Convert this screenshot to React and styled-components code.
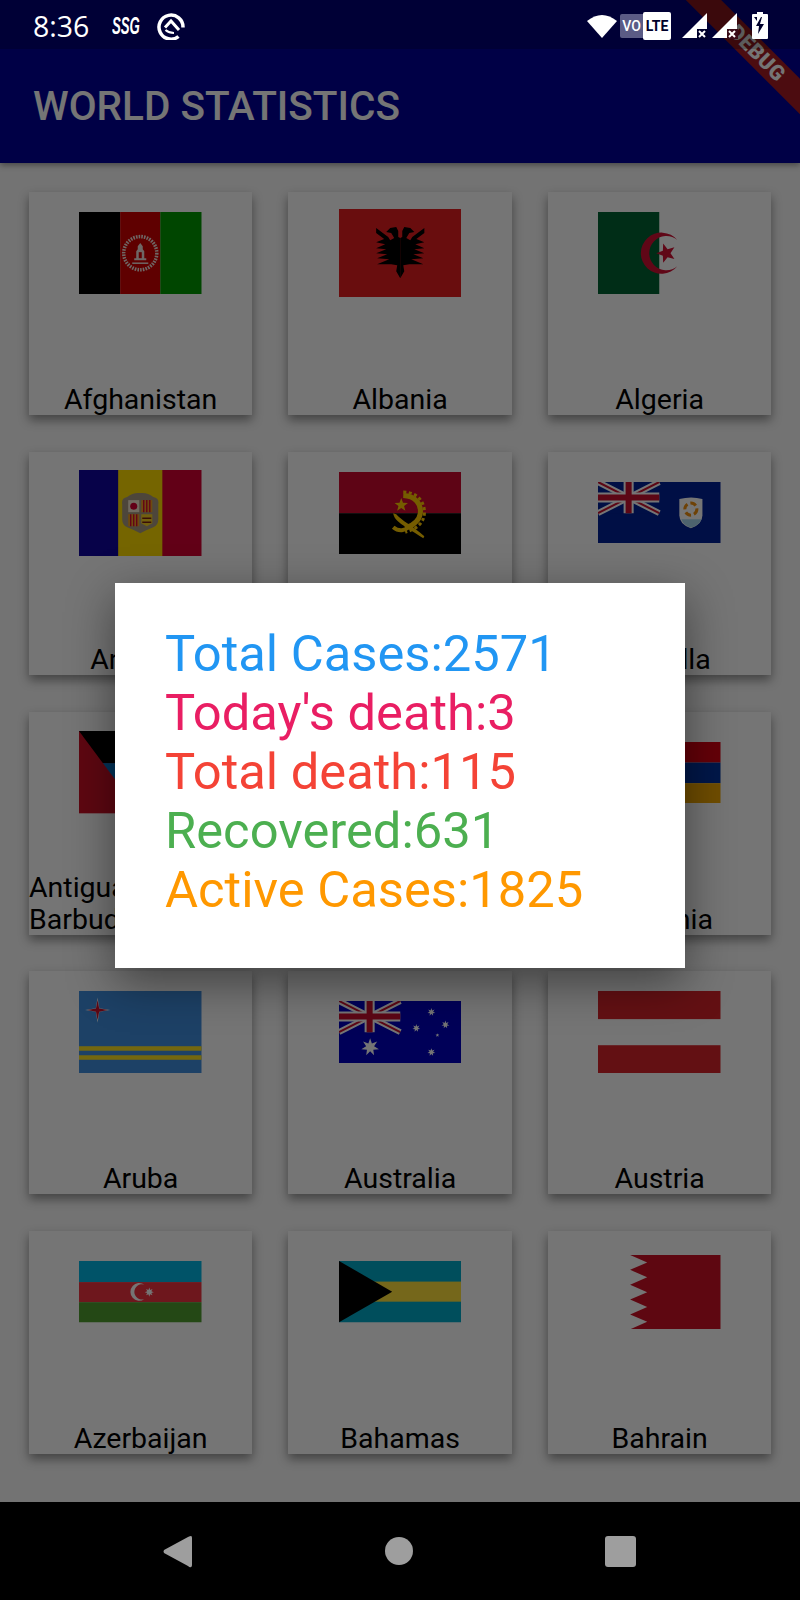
import React from "react";
import styled, { createGlobalStyle } from "styled-components";

const GlobalStyle = createGlobalStyle`
	html, body {
		margin: 0;
		padding: 0;
		background: #000;
		font-family: Roboto, "Liberation Sans", sans-serif;
	}
`;

const Screen = styled.div`
	position: relative;
	width: 800px;
	height: 1600px;
	overflow: hidden;
	display: flex;
	flex-direction: column;
`;

const StatusBar = styled.div`
	position: absolute;
	top: 0;
	left: 0;
	right: 0;
	height: 49px;
	z-index: 3;
	display: flex;
	align-items: center;
	justify-content: space-between;
	padding: 2px 32px 0 33px;
	box-sizing: border-box;
	background: rgba(0, 0, 0, 0.22);
	color: #fff;
`;

const StatusLeft = styled.div`
	display: flex;
	align-items: center;
`;

const StatusRight = styled.div`
	display: flex;
	align-items: center;
`;

const Clock = styled.span`
	font-size: 28.5px;
	font-weight: 500;
	line-height: 34px;
	font-family: "Open Sans", Roboto, sans-serif;
	width: 79px;
`;

const Carrier = styled.span`
	font-family: "Liberation Sans", sans-serif;
	font-size: 24px;
	line-height: 28px;
	font-style: italic;
	font-weight: 700;
	width: 45px;
	transform: scaleX(0.55);
	transform-origin: left center;
`;

const VoLte = styled.div`
	display: flex;
	align-items: center;
	margin: 0 11px 0 3px;
`;

const VoTag = styled.span`
	background: #5b5b85;
	color: #fff;
	font-size: 14px;
	font-weight: 500;
	width: 23px;
	height: 24px;
	line-height: 24px;
	text-align: center;
	border-radius: 2px 0 0 2px;
`;

const LteTag = styled.span`
	background: #fff;
	color: #00002a;
	font-size: 14px;
	font-weight: 700;
	width: 28px;
	height: 28px;
	line-height: 28px;
	text-align: center;
	border-radius: 2px;
`;

const Spacer = styled.span`
	width: ${props => props.$size}px;
`;

const AppBar = styled.header`
	height: 163px;
	flex: none;
	box-sizing: border-box;
	padding-top: 49px;
	background: #000098;
	display: flex;
	align-items: center;
	box-shadow: 0 2px 6px rgba(0, 0, 0, 0.4);
	position: relative;
	z-index: 1;
`;

const Title = styled.h1`
	margin: 0 0 0 33px;
	color: #fff;
	font-size: 40.5px;
	font-weight: 500;
`;

const DebugBanner = styled.div`
	position: absolute;
	z-index: 1;
	top: 41px;
	left: 657px;
	width: 200px;
	height: 25px;
	line-height: 25px;
	transform: rotate(45deg);
	background: #a51c24;
	color: #fff;
	font-size: 21px;
	font-weight: 900;
	letter-spacing: 0.5px;
	text-align: center;
`;

const Body = styled.main`
	flex: 1;
	background: #fafafa;
	padding: 29px 0 0 29px;
	overflow: hidden;
`;

const CountryGrid = styled.div`
	display: grid;
	grid-template-columns: 223.3px 223.7px 223.3px;
	grid-auto-rows: 223px;
	column-gap: 36px;
	row-gap: 36.75px;
`;

const Card = styled.div`
	background: #fff;
	box-shadow: 0 5px 10px rgba(0, 0, 0, 0.42);
	display: flex;
	flex-direction: column;
	align-items: center;
	justify-content: space-between;
`;

const FlagBox = styled.div`
	height: 122px;
	display: flex;
	align-items: center;
`;

const FlagArt = styled.svg`
	display: block;
	width: 122.5px;
	height: auto;
`;

const CountryName = styled.span`
	font-size: 28.5px;
	line-height: 32px;
	margin-bottom: -1px;
	color: #000;
`;

const Barrier = styled.div`
	position: absolute;
	z-index: 2;
	top: 0;
	left: 0;
	right: 0;
	height: 1502px;
	background: rgba(0, 0, 0, 0.54);
`;

const DialogArea = styled.div`
	position: absolute;
	z-index: 2;
	top: 49px;
	left: 0;
	right: 0;
	height: 1453px;
	display: flex;
	align-items: center;
	justify-content: center;
`;

const Dialog = styled.div`
	width: 570px;
	height: 385px;
	box-sizing: border-box;
	padding: 41px 50px;
	background: #fff;
	box-shadow: 0 14px 44px rgba(0, 0, 0, 0.45);
`;

const Stat = styled.div`
	font-size: 50.7px;
	line-height: 59px;
	color: ${props => props.$color};
`;

const NavBar = styled.nav`
	position: absolute;
	z-index: 3;
	left: 0;
	right: 0;
	bottom: 0;
	height: 98px;
	background: #000;
	display: flex;
	align-items: center;
	justify-content: space-between;
	padding: 0 164px 0 163px;
	box-sizing: border-box;
`;

const Star = ({ cx, cy, r, inner = 0.42, n = 5, fill = "#fff", rot = -90 }) => {
	const pts = [];
	for (let i = 0; i < n * 2; i++) {
		const rad = i % 2 ? r * inner : r;
		const a = ((rot + (i * 180) / n) * Math.PI) / 180;
		pts.push(`${(cx + rad * Math.cos(a)).toFixed(2)},${(cy + rad * Math.sin(a)).toFixed(2)}`);
	}
	return <polygon points={pts.join(" ")} fill={fill} />;
};

const UnionJack = ({ field }) => (
	<g>
		<rect width="61" height="31" fill={field} />
		<path d="M0 0L61 31M61 0L0 31" stroke="#fff" strokeWidth="6" />
		<path d="M0 0L61 31M61 0L0 31" stroke="#C8102E" strokeWidth="2" />
		<path d="M30.5 0V31M0 15.5H61" stroke="#fff" strokeWidth="10" />
		<path d="M30.5 0V31M0 15.5H61" stroke="#C8102E" strokeWidth="6" />
	</g>
);

const Afghanistan = () => (
	<FlagArt viewBox="0 0 122 82">
		<rect width="41" height="82" fill="#000" />
		<rect x="41" width="40" height="82" fill="#D00000" />
		<rect x="81" width="41" height="82" fill="#009900" />
		<circle cx="61" cy="41" r="16.5" fill="none" stroke="#f0e0dc" strokeWidth="3.5" strokeDasharray="1.6 1.1" />
		<path d="M55 48h12v-2h-2v-7l-1.500-2v-3L61 31l-2.500 3v3L57 39v7h-2z" fill="#f0e0dc" />
		<rect x="59.5" y="40" width="3" height="6" fill="#D00000" />
		<path d="M53 51h16" stroke="#f0e0dc" strokeWidth="1.500" />
	</FlagArt>
);

const eagleHalf = "M61 69L65 62L64 56L70 55L84 55L72 50L84 49L74 45L85 44L75 40L85 39L76 35L85 33L77 30L85 24L85 19L73 28L71 31L67 29L70 24L75 23L71 19L65 18L63 22L63 28L61 29Z";

const Albania = () => (
	<FlagArt viewBox="0 0 122 88">
		<rect width="122" height="88" fill="#E41E20" />
		<path d={eagleHalf} fill="#000" />
		<path d={eagleHalf} fill="#000" transform="matrix(-1 0 0 1 122 0)" />
	</FlagArt>
);

const Algeria = () => (
	<FlagArt viewBox="0 0 122 82">
		<rect width="122" height="82" fill="#fff" />
		<rect width="61" height="82" fill="#006233" />
		<path d="M79 28A20.500 20.500 0 1 0 79 54A17 17 0 1 1 79 28Z" fill="#D21034" />
		<Star cx={68} cy={41} r={10} fill="#D21034" rot={180} />
	</FlagArt>
);

const Andorra = () => (
	<FlagArt viewBox="0 0 122 86">
		<rect width="40" height="86" fill="#10069F" />
		<rect x="39" width="45" height="86" fill="#FEDD00" />
		<rect x="83" width="39" height="86" fill="#D50032" />
		<path d="M48 27q6-5 13-4q7-1 13 4q6 1 5 7v15q0 6-5 8l-7 3l-6 3l-6-3l-7-3q-5-2-5-8V34q-1-6 5-7z" fill="#a89a80" />
		<path d="M49 30h11v12H49z" fill="#f4e6d0" />
		<circle cx="54.500" cy="36" r="3.500" fill="#D50032" />
		<path d="M62 30h11v12H62z" fill="#F2A020" />
		<path d="M64.500 30v12M67.500 30v12M70.500 30v12" stroke="#D50032" strokeWidth="1.300" />
		<path d="M49 44h11v12H49z" fill="#F2A020" />
		<path d="M51.500 44v12M54.500 44v12M57.500 44v12" stroke="#D50032" strokeWidth="1.300" />
		<path d="M62 44h11v9l-5.500 3l-5.500-3z" fill="#F8D020" />
		<path d="M63 48h9M63 52h9" stroke="#7a2010" strokeWidth="1.600" />
	</FlagArt>
);

const Angola = () => (
	<FlagArt viewBox="0 0 122 82">
		<rect width="122" height="41" fill="#CC092F" />
		<rect y="41" width="122" height="41" fill="#000" />
		<path d="M64 23.500C76 24 82 32 81 41C80 49 74 53 66 56" fill="none" stroke="#FFCB00" strokeWidth="5" />
		<path d="M64 20C79 20 86 31 85 42C84 52 76 57 66 60" fill="none" stroke="#FFCB00" strokeWidth="3" strokeDasharray="3 2.500" />
		<path d="M54 55C60 60 66 58 69 55" fill="none" stroke="#FFCB00" strokeWidth="4" />
		<path d="M54 41C55 49 64 53 84 66L85 64C73 53 63 49 57 42Z" fill="#FFCB00" />
		<Star cx={62} cy={33} r={7} fill="#FFCB00" />
	</FlagArt>
);

const Anguilla = () => (
	<FlagArt viewBox="0 0 122 61">
		<rect width="122" height="61" fill="#012196" />
		<UnionJack field="#012196" />
		<path d="M81 17q12-3 23 0v16q0 9-11.500 13Q81 42 81 33z" fill="#fff" />
		<path d="M83 37h20q-2 6-10.500 8.500Q85 43 83 37z" fill="#A8D8F0" />
		<circle cx="92.500" cy="27" r="6" fill="none" stroke="#F09010" strokeWidth="3" strokeDasharray="6 3" />
	</FlagArt>
);

const Antigua = () => (
	<FlagArt viewBox="0 0 122 82">
		<clipPath id="antigua-v">
			<polygon points="0,0 122,0 61,82" />
		</clipPath>
		<rect width="122" height="82" fill="#CE1126" />
		<g clipPath="url(#antigua-v)">
			<rect width="122" height="32" fill="#000" />
			<rect y="52" width="122" height="30" fill="#fff" />
			<Star cx={61} cy={32} r={22} inner={0.6} n={16} fill="#FCD116" />
			<rect y="32" width="122" height="20" fill="#0072C6" />
		</g>
	</FlagArt>
);

const Argentina = () => (
	<FlagArt viewBox="0 0 122 77">
		<rect width="122" height="77" fill="#74ACDF" />
		<rect y="25.700" width="122" height="25.700" fill="#fff" />
		<circle cx="61" cy="38.500" r="8" fill="#F6B40E" />
	</FlagArt>
);

const Armenia = () => (
	<FlagArt viewBox="0 0 122 61">
		<rect width="122" height="20.500" fill="#D90012" />
		<rect y="20.500" width="122" height="20.500" fill="#0033A0" />
		<rect y="41" width="122" height="20" fill="#F2A800" />
	</FlagArt>
);

const Aruba = () => (
	<FlagArt viewBox="0 0 122 82">
		<rect width="122" height="82" fill="#418FDE" />
		<rect y="55" width="122" height="4.500" fill="#FBE122" />
		<rect y="64" width="122" height="4.500" fill="#FBE122" />
		<Star cx={18.500} cy={19} r={12.500} inner={0.2} n={4} fill="#fff" />
		<Star cx={18.500} cy={19} r={10} inner={0.22} n={4} fill="#C8102E" />
	</FlagArt>
);

const Australia = () => (
	<FlagArt viewBox="0 0 122 62">
		<rect width="122" height="62" fill="#0000C0" />
		<UnionJack field="#0000C0" />
		<Star cx={31} cy={46} r={9} inner={0.45} n={7} />
		<Star cx={92} cy={11} r={4} inner={0.45} n={7} />
		<Star cx={77} cy={27} r={4} inner={0.45} n={7} />
		<Star cx={106} cy={23.500} r={4} inner={0.45} n={7} />
		<Star cx={98} cy={34} r={2} />
		<Star cx={92} cy={51} r={4} inner={0.45} n={7} />
	</FlagArt>
);

const Austria = () => (
	<FlagArt viewBox="0 0 122 82">
		<rect width="122" height="82" fill="#fff" />
		<rect width="122" height="28" fill="#D8232A" />
		<rect y="54" width="122" height="28" fill="#D8232A" />
	</FlagArt>
);

const Azerbaijan = () => (
	<FlagArt viewBox="0 0 122 61">
		<rect width="122" height="21" fill="#00B5E2" />
		<rect y="21" width="122" height="20" fill="#EF3340" />
		<rect y="41" width="122" height="20" fill="#509E2F" />
		<path d="M65 23.500A8.800 8.800 0 1 0 65 38A7.600 7.600 0 1 1 65 23.500Z" fill="#fff" />
		<Star cx={70} cy={31} r={4.500} inner={0.5} n={8} />
	</FlagArt>
);

const Bahamas = () => (
	<FlagArt viewBox="0 0 122 61">
		<rect width="122" height="61" fill="#00ABC9" />
		<rect y="20.500" width="122" height="20" fill="#FFE13C" />
		<polygon points="0,0 53,30.500 0,61" fill="#000" />
	</FlagArt>
);

const Bahrain = () => (
	<FlagArt viewBox="0 0 122 74">
		<rect width="122" height="74" fill="#fff" />
		<polygon
			points="32,0 122,0 122,74 32,74 49,66.600 32,59.200 49,51.800 32,44.400 49,37 32,29.600 49,22.200 32,14.800 49,7.400"
			fill="#CE1126"
		/>
	</FlagArt>
);

const countries = [
	{ name: "Afghanistan", Flag: Afghanistan },
	{ name: "Albania", Flag: Albania },
	{ name: "Algeria", Flag: Algeria },
	{ name: "Andorra", Flag: Andorra },
	{ name: "Angola", Flag: Angola },
	{ name: "Anguilla", Flag: Anguilla },
	{ name: "Antigua and Barbuda", Flag: Antigua },
	{ name: "Argentina", Flag: Argentina },
	{ name: "Armenia", Flag: Armenia },
	{ name: "Aruba", Flag: Aruba },
	{ name: "Australia", Flag: Australia },
	{ name: "Austria", Flag: Austria },
	{ name: "Azerbaijan", Flag: Azerbaijan },
	{ name: "Bahamas", Flag: Bahamas },
	{ name: "Bahrain", Flag: Bahrain },
];

const stats = [
	{ label: "Total Cases:2571", color: "#2196F3" },
	{ label: "Today's death:3", color: "#E91E63" },
	{ label: "Total death:115", color: "#F44336" },
	{ label: "Recovered:631", color: "#4CAF50" },
	{ label: "Active Cases:1825", color: "#FF9800" },
];

const SignalIcon = ({ gap = "#00002c" }) => (
	<svg width="26" height="26" viewBox="0 0 26 26">
		<polygon points="0,25 25,0 25,25" fill="#fff" />
		<rect x="15" y="16" width="11" height="10" fill={gap} />
		<path d="M17 18l6 6M23 18l-6 6" stroke="#fff" strokeWidth="2" />
	</svg>
);

export default function App() {
	return (
		<Screen>
			<GlobalStyle />
			<StatusBar>
				<StatusLeft>
					<Clock>8:36</Clock>
					<Carrier>SSG</Carrier>
					<svg width="28" height="28" viewBox="0 0 28 28">
						<path d="M21.500 24.500A12 12 0 1 1 26 15.500" fill="none" stroke="#fff" strokeWidth="3.500" />
						<path d="M8 15.500L14 9L22 18" fill="none" stroke="#fff" strokeWidth="3" />
						<path d="M8.500 18Q12 21 17 21" fill="none" stroke="#fff" strokeWidth="2.200" />
					</svg>
				</StatusLeft>
				<StatusRight>
					<svg width="30" height="24" viewBox="0 0 30 24">
						<path d="M0 7Q15-5 30 7L15 24Z" fill="#fff" />
					</svg>
					<VoLte>
						<VoTag>VO</VoTag>
						<LteTag>LTE</LteTag>
					</VoLte>
					<SignalIcon />
					<Spacer $size={4} />
					<SignalIcon gap="#3a0d1a" />
					<Spacer $size={14} />
					<svg width="16" height="27" viewBox="0 0 16 27">
						<path d="M5 0h6v2h4q1 0 1 1v23q0 1-1 1H1q-1 0-1-1V3q0-1 1-1h4z" fill="#fff" />
						<path d="M9 5L4 14h3l-1 8l6-10H8l2-7z" fill="#00002c" />
						<path d="M2 5h3v4z" fill="#00002c" />
					</svg>
				</StatusRight>
			</StatusBar>

			<AppBar>
				<Title>WORLD STATISTICS</Title>
			</AppBar>
			<DebugBanner>DEBUG</DebugBanner>

			<Body>
				<CountryGrid>
					{countries.map(({ name, Flag }) => (
						<Card key={name}>
							<FlagBox>
								<Flag />
							</FlagBox>
							<CountryName>{name}</CountryName>
						</Card>
					))}
				</CountryGrid>
			</Body>

			<Barrier />
			<DialogArea>
				<Dialog>
					{stats.map(s => (
						<Stat key={s.label} $color={s.color}>{s.label}</Stat>
					))}
				</Dialog>
			</DialogArea>

			<NavBar>
				<svg width="29" height="33" viewBox="0 0 29 33">
					<path d="M28 1q1 0 1 2v27q0 2-1 2q-1 1-3-1L1 18q-1-1.500 0-3L25 2q2-1 3-1z" fill="#9e9e9e" />
				</svg>
				<svg width="28" height="28" viewBox="0 0 28 28">
					<circle cx="14" cy="14" r="14" fill="#9e9e9e" />
				</svg>
				<svg width="31" height="31" viewBox="0 0 31 31">
					<rect width="31" height="31" rx="3" fill="#9e9e9e" />
				</svg>
			</NavBar>
		</Screen>
	);
}
